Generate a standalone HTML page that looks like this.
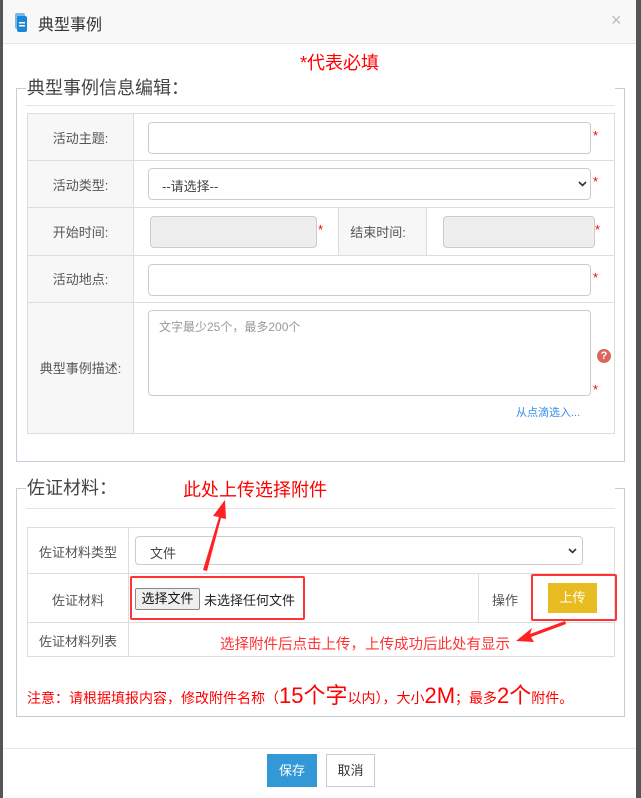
<!DOCTYPE html>
<html><head><meta charset="utf-8"><style>
*{box-sizing:border-box;margin:0;padding:0}
body{width:641px;height:798px;position:relative;overflow:hidden;background:#fff;font-family:"Liberation Sans","Noto Sans CJK SC",sans-serif;color:#333}
.a{position:absolute}
.inp{position:absolute;border:1px solid #ccc;border-radius:4px;background:#fff}
.lbl{position:absolute;font-size:13px;color:#555;text-align:center}
.red{color:#f00}
.star{position:absolute;color:#f00;font-size:13px}
.bd{position:absolute;background:#ddd}
</style></head><body>
<div class="a" style="left:0;top:0;width:3px;height:798px;background:#555"></div>
<div class="a" style="left:636px;top:0;width:5px;height:798px;background:#555"></div>
<div class="a" style="left:3px;top:0;width:633px;height:44px;background:#f8f8f8;border-bottom:1px solid #e5e5e5"></div>
<svg class="a" style="left:15px;top:13px" width="13" height="20"><rect x="0" y="0" width="10" height="16" rx="2" fill="#7bb8e8"/><rect x="2" y="3" width="10" height="16" rx="2" fill="#1e88d8"/><rect x="4" y="9" width="6" height="1.5" fill="#fff"/><rect x="4" y="12" width="6" height="1.5" fill="#fff"/></svg>
<div class="a" style="left:38px;top:11px;font-size:16px;color:#333">典型事例</div>
<div class="a" style="left:611px;top:10px;font-size:18px;color:#bbb">×</div>

<div class="a red" style="left:300px;top:49px;font-size:18px">*代表必填</div>
<div class="a" style="left:16px;top:88px;width:609px;height:374px;border:1px solid #c8cbd8;border-top:none"></div>
<div class="a" style="left:16px;top:88px;width:10px;height:1px;background:#c8cbd8"></div>
<div class="a" style="left:615px;top:88px;width:10px;height:1px;background:#c8cbd8"></div>
<div class="a" style="left:27px;top:74px;font-size:18px;color:#444">典型事例信息编辑：</div>
<div class="a" style="left:26px;top:105px;width:589px;height:1px;background:#e5e5e5"></div>

<div class="a" style="left:27px;top:113px;width:588px;height:321px;border:1px solid #ddd"></div>
<div class="a" style="left:28px;top:114px;width:105px;height:319px;background:#f7f7f7"></div>
<div class="bd" style="left:133px;top:114px;width:1px;height:319px"></div>
<div class="bd" style="left:28px;top:160px;width:586px;height:1px"></div>
<div class="bd" style="left:28px;top:207px;width:586px;height:1px"></div>
<div class="bd" style="left:28px;top:255px;width:586px;height:1px"></div>
<div class="bd" style="left:28px;top:302px;width:586px;height:1px"></div>
<div class="a" style="left:338px;top:208px;width:89px;height:47px;background:#f7f7f7;border-left:1px solid #ddd;border-right:1px solid #ddd"></div>

<div class="lbl" style="left:28px;top:128px;width:105px">活动主题:</div>
<div class="lbl" style="left:28px;top:175px;width:105px">活动类型:</div>
<div class="lbl" style="left:28px;top:222px;width:105px">开始时间:</div>
<div class="lbl" style="left:338px;top:222px;width:80px">结束时间:</div>
<div class="lbl" style="left:28px;top:269px;width:105px">活动地点:</div>
<div class="lbl" style="left:28px;top:358px;width:105px">典型事例描述:</div>

<div class="inp" style="left:148px;top:122px;width:443px;height:32px"></div><div class="star" style="left:593px;top:128px">*</div>
<div class="inp" style="left:148px;top:168px;width:443px;height:32px"></div>
<div class="a" style="left:162px;top:176px;font-size:13px;color:#444">--请选择--</div>
<svg class="a" style="left:578px;top:181px" width="9" height="6"><path d="M1 1L4.5 4.5L8 1" stroke="#333" stroke-width="1.6" fill="none"/></svg><div class="star" style="left:593px;top:174px">*</div>
<div class="inp" style="left:150px;top:216px;width:167px;height:32px;background:#eee"></div><div class="star" style="left:318px;top:222px">*</div>
<div class="inp" style="left:443px;top:216px;width:152px;height:32px;background:#eee"></div><div class="star" style="left:595px;top:222px">*</div>
<div class="inp" style="left:148px;top:264px;width:443px;height:32px"></div><div class="star" style="left:593px;top:270px">*</div>
<div class="inp" style="left:148px;top:310px;width:443px;height:86px"></div>
<div class="a" style="left:159px;top:318px;font-size:12px;color:#999">文字最少25个，最多200个</div>
<div class="star" style="left:593px;top:382px">*</div>
<div class="a" style="left:597px;top:349px;width:14px;height:14px;border-radius:50%;background:#d9685a;color:#fff;font-size:11px;font-weight:bold;text-align:center;line-height:14px">?</div>
<div class="a" style="left:516px;top:404px;font-size:11px;color:#3a8ee6">从点滴选入...</div>

<div class="a" style="left:16px;top:488px;width:609px;height:229px;border:1px solid #c8cbd8;border-top:none"></div>
<div class="a" style="left:16px;top:488px;width:10px;height:1px;background:#c8cbd8"></div>
<div class="a" style="left:615px;top:488px;width:10px;height:1px;background:#c8cbd8"></div>
<div class="a" style="left:27px;top:474px;font-size:18px;color:#444">佐证材料：</div>
<div class="a red" style="left:183px;top:476px;font-size:18px">此处上传选择附件</div>
<div class="a" style="left:26px;top:508px;width:589px;height:1px;background:#e5e5e5"></div>

<div class="a" style="left:27px;top:527px;width:588px;height:130px;border:1px solid #ddd"></div>
<div class="bd" style="left:128px;top:528px;width:1px;height:128px"></div>
<div class="bd" style="left:28px;top:573px;width:586px;height:1px"></div>
<div class="bd" style="left:28px;top:622px;width:586px;height:1px"></div>
<div class="bd" style="left:478px;top:574px;width:1px;height:48px"></div>
<div class="lbl" style="left:28px;top:542px;width:100px">佐证材料类型</div>
<div class="lbl" style="left:28px;top:590px;width:100px">佐证材料</div>
<div class="lbl" style="left:28px;top:631px;width:100px">佐证材料列表</div>
<div class="inp" style="left:135px;top:536px;width:448px;height:29px"></div>
<div class="a" style="left:150px;top:543px;font-size:13px;color:#444">文件</div>
<svg class="a" style="left:568px;top:548px" width="9" height="6"><path d="M1 1L4.5 4.5L8 1" stroke="#333" stroke-width="1.6" fill="none"/></svg>
<div class="a" style="left:135px;top:588px;width:65px;height:22px;background:#efefef;border:1px solid #888;border-radius:2px;font-size:13px;text-align:center;line-height:20px;color:#111">选择文件</div>
<div class="a" style="left:204px;top:590px;font-size:13px;color:#222">未选择任何文件</div>
<div class="a" style="left:130px;top:576px;width:175px;height:44px;border:2px solid #f33;border-radius:2px"></div>
<div class="lbl" style="left:485px;top:590px;width:40px">操作</div>
<div class="a" style="left:548px;top:583px;width:49px;height:30px;background:#e8bc21;color:#fff;font-size:13px;text-align:center;line-height:30px">上传</div>
<div class="a" style="left:531px;top:574px;width:86px;height:47px;border:2px solid #f33;border-radius:2px"></div>
<div class="a red" style="left:220px;top:633px;font-size:14.5px;color:#f33;white-space:nowrap">选择附件后点击上传，上传成功后此处有显示</div>
<svg class="a" style="left:0;top:0" width="641" height="798">
<polygon points="203,570 219,517 213,516 225,500 226,519 221,518 207,571" fill="#f22"/>
<polygon points="565,621 530,634 532,628 516,641 534,642 531,637 566,624" fill="#f22"/>
</svg>
<div class="a" style="left:27px;top:678px;color:#f00;font-size:14px;white-space:nowrap">注意：请根据填报内容，修改附件名称（<span style="font-size:22px">15个字</span>以内），大小<span style="font-size:22px">2M</span>；最多<span style="font-size:22px">2个</span>附件。</div>

<div class="a" style="left:3px;top:748px;width:633px;height:1px;background:#e8e8e8"></div>
<div class="a" style="left:267px;top:754px;width:50px;height:33px;background:#3399d6;color:#fff;font-size:13px;text-align:center;line-height:33px">保存</div>
<div class="a" style="left:326px;top:754px;width:49px;height:33px;border:1px solid #ccc;background:#fff;font-size:13px;text-align:center;line-height:31px;color:#333">取消</div>
</body></html>
